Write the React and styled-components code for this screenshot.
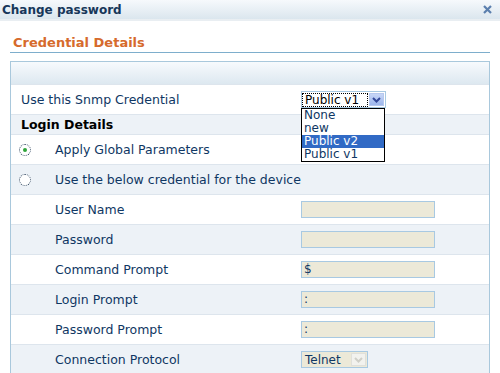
import styled, { createGlobalStyle } from 'styled-components';

const GlobalStyle = createGlobalStyle`
  body {
    margin: 0;
    background: #fff;
    font-family: "DejaVu Sans", Verdana, sans-serif;
  }
`;

const Window = styled.div`
  width: 500px;
  height: 373px;
  overflow: hidden;
  background: #fff;
`;

const TitleBar = styled.div`
  height: 19px;
  display: flex;
  align-items: center;
  justify-content: space-between;
  padding: 0 8px 0 2px;
  background: linear-gradient(#f6f9fc, #dbe6ee);
  border-bottom: 2px solid #e9eef2;
`;

const Title = styled.span`
  font-size: 12px;
  font-weight: bold;
  color: #17375a;
`;

const CloseButton = styled.svg`
  width: 9px;
  height: 9px;
`;

const Content = styled.div`
  padding: 0 10px;
`;

const SectionTitle = styled.div`
  margin-top: 14px;
  padding: 0 0 2px 3px;
  font-size: 13px;
  font-weight: bold;
  color: #d66a2c;
  border-bottom: 1px solid #7eaecc;
`;

const Panel = styled.div`
  margin-top: 8px;
  border: 1px solid #a9c8dc;
  border-bottom: none;
`;

const PanelHeader = styled.div`
  height: 22px;
  background: linear-gradient(#f7fafd, #dde8f0);
`;

const Row = styled.div`
  position: relative;
  display: flex;
  align-items: center;
  height: ${(p) => (p.$short ? 19 : 29)}px;
  border-top: 1px solid #dde5ed;
  background: ${(p) => (p.$alt ? '#edf2f7' : '#fff')};
`;

const Label = styled.div`
  width: ${(p) => (p.$indent ? 246 : 280)}px;
  padding-left: ${(p) => (p.$indent ? 44 : 10)}px;
  font-size: 12.5px;
  color: ${(p) => (p.$bold ? '#000' : '#0f3763')};
  font-weight: ${(p) => (p.$bold ? 'bold' : 'normal')};
`;

const RadioWrap = styled.div`
  display: flex;
  align-items: center;
  padding-left: 8px;
  font-size: 12.5px;
  color: #0f3763;
  gap: 24px;
`;

const Radio = styled.span`
  display: flex;
  align-items: center;
  justify-content: center;
  width: 10px;
  height: 10px;
  border: 1px dotted #384e66;
  border-radius: 50%;
  background: #fff;

  &::after {
    content: '';
    width: 4px;
    height: 4px;
    border-radius: 50%;
    background: ${(p) => (p.$checked ? '#2fa43a' : 'transparent')};
  }
`;

const TextField = styled.div`
  width: 130px;
  height: 15px;
  border: 1px solid #a8c9e2;
  background: #ece9d8;
  font-size: 12px;
  line-height: 15px;
  padding-left: 2px;
  color: #0f3763;
`;

const Select = styled.div`
  display: flex;
  align-items: center;
  height: 15px;
  border: 1px solid #a8c9e2;
  background: ${(p) => (p.$disabled ? '#ece9d8' : '#fff')};
  font-size: 12px;
  color: #0f3763;
`;

const SelectText = styled.span`
  width: ${(p) => p.$w}px;
  padding-left: 2px;
  line-height: 12px;
  border: 1px dotted ${(p) => (p.$focus ? '#000' : 'transparent')};
  color: ${(p) => (p.$focus ? '#000' : '#0f3763')};
`;

const ArrowBox = styled.span`
  display: flex;
  align-items: center;
  justify-content: center;
  width: 15px;
  height: 13px;
  margin: 0 1px;
  background: ${(p) =>
    p.$disabled ? '#f2f2ee' : 'linear-gradient(#c7d6f7, #9db6ec)'};
  border: 1px solid ${(p) => (p.$disabled ? '#e0e0da' : '#b6c8ee')};
  box-sizing: border-box;
`;

const DropList = styled.div`
  position: absolute;
  left: 290px;
  top: 23px;
  width: 82px;
  border: 1px solid #000;
  background: #fff;
  z-index: 2;
`;

const Option = styled.div`
  height: 13px;
  line-height: 13px;
  padding-left: 2px;
  font-size: 12px;
  color: ${(p) => (p.$selected ? '#fff' : '#0f3763')};
  background: ${(p) => (p.$selected ? '#316ac5' : '#fff')};
`;

const Arrow = ({ color }) => (
  <svg width="9" height="6" viewBox="0 0 9 6">
    <path d="M1 1 L4.5 4.5 L8 1" fill="none" stroke={color} strokeWidth="2" />
  </svg>
);

const fields = [
  { label: 'User Name', value: '' },
  { label: 'Password', value: '' },
  { label: 'Command Prompt', value: '$' },
  { label: 'Login Prompt', value: ':' },
  { label: 'Password Prompt', value: ':' },
];

const options = ['None', 'new', 'Public v2', 'Public v1'];

export default function App() {
  return (
    <Window>
      <GlobalStyle />
      <TitleBar>
        <Title>Change password</Title>
        <CloseButton viewBox="0 0 9 9">
          <path d="M1 1 L8 8 M8 1 L1 8" stroke="#5b7fae" strokeWidth="2.2" />
        </CloseButton>
      </TitleBar>
      <Content>
        <SectionTitle>Credential Details</SectionTitle>
        <Panel>
          <PanelHeader />
          <Row>
            <Label>Use this Snmp Credential</Label>
            <Select>
              <SelectText $w={62} $focus>Public v1</SelectText>
              <ArrowBox>
                <Arrow color="#33489a" />
              </ArrowBox>
            </Select>
            <DropList>
              {options.map((o) => (
                <Option key={o} $selected={o === 'Public v2'}>
                  {o}
                </Option>
              ))}
            </DropList>
          </Row>
          <Row $alt $short>
            <Label $bold>Login Details</Label>
          </Row>
          <Row>
            <RadioWrap>
              <Radio $checked />
              Apply Global Parameters
            </RadioWrap>
          </Row>
          <Row $alt>
            <RadioWrap>
              <Radio />
              Use the below credential for the device
            </RadioWrap>
          </Row>
          {fields.map((f, i) => (
            <Row key={f.label} $alt={i % 2 === 1}>
              <Label $indent>{f.label}</Label>
              <TextField>{f.value}</TextField>
            </Row>
          ))}
          <Row $alt>
            <Label $indent>Connection Protocol</Label>
            <Select $disabled>
              <SelectText $w={44}>Telnet</SelectText>
              <ArrowBox $disabled>
                <Arrow color="#cfcfc8" />
              </ArrowBox>
            </Select>
          </Row>
        </Panel>
      </Content>
    </Window>
  );
}
